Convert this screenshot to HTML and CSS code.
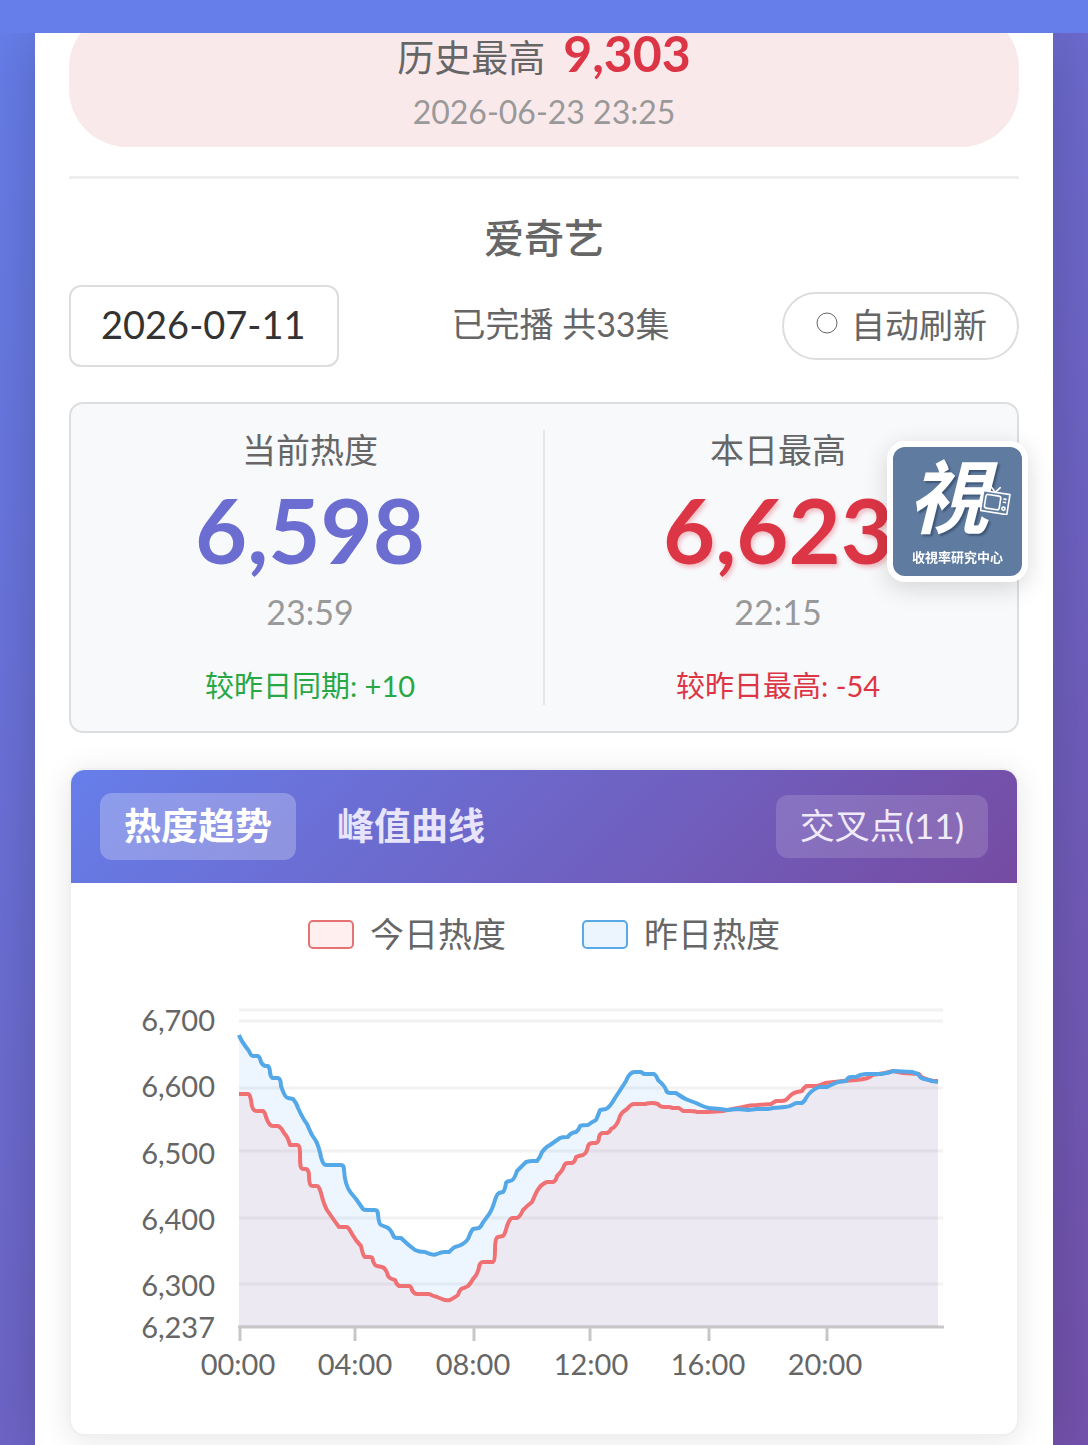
FILE: index.html
```html
<!DOCTYPE html>
<html lang="zh-CN">
<head>
    <meta charset="UTF-8">
    <meta name="viewport" content="width=device-width, initial-scale=1.0">
    <title>爱奇艺 热度趋势</title>
    <link rel="stylesheet" href="styles.css">
</head>
<body>
    <div class="top-bar"></div>

    <div class="page">
        <main class="container">
            <!-- 历史最高 -->
            <section class="record">
                <div class="record-main">
                    <span>历史最高</span>
                    <strong>9,303</strong>
                </div>
                <div class="record-time">2026-06-23 23:25</div>
            </section>

            <hr class="divider">

            <h2 class="platform">爱奇艺</h2>

            <div class="controls">
                <input type="text" class="date-input" value="2026-07-11" aria-label="日期">
                <span class="status">已完播 共33集</span>
                <button type="button" class="refresh-btn">
                    <svg class="refresh-icon" viewBox="0 0 22 22" aria-hidden="true">
                        <circle cx="11" cy="11" r="10" fill="none" stroke="#666" stroke-width="1"/>
                    </svg>
                    <span>自动刷新</span>
                </button>
            </div>

            <!-- 热度数据 -->
            <section class="stats">
                <div class="stat">
                    <div class="stat-label">当前热度</div>
                    <div class="stat-value current">6,598</div>
                    <div class="stat-time">23:59</div>
                    <div class="stat-diff up">较昨日同期: +10</div>
                </div>
                <div class="stat">
                    <div class="stat-label">本日最高</div>
                    <div class="stat-value highest">6,623</div>
                    <div class="stat-time">22:15</div>
                    <div class="stat-diff down">较昨日最高: -54</div>
                </div>
            </section>

            <!-- 趋势图 -->
            <section class="chart-card">
                <div class="chart-header">
                    <div class="tabs">
                        <button type="button" class="tab active">热度趋势</button>
                        <button type="button" class="tab">峰值曲线</button>
                    </div>
                    <button type="button" class="cross-btn">交叉点(11)</button>
                </div>

                <div class="legend">
                    <div class="legend-item"><span class="swatch today"></span>今日热度</div>
                    <div class="legend-item"><span class="swatch yesterday"></span>昨日热度</div>
                </div>

                <svg class="chart" viewBox="0 0 946 440" role="img" aria-label="热度趋势图">
                    <g class="grid">
                        <path d="M168 30H872M168 41H872M168 108H872M168 171H872M168 238H872M168 304H872"/>
                    </g>

                    <path class="area-yesterday" d="M168 55 172 63 178 71 181 76 188 76 191 85 198 86 200 98 208 98 211 108 216 118 222 119 229 132 236 144 241 155 246 163 250 177 254 185 272 185 274 200 279 213 285 219 293 230 306 230 308 244 315 247 320 251 323 257 330 258 336 263 344 270 354 272 362 275 372 272 378 272 384 267 391 264 397 259 401 249 408 248 416 237 421 227 426 214 432 212 435 202 442 201 447 191 455 182 467 181 471 172 479 165 489 158 497 157 501 153 506 151 510 145 517 144 525 140 529 130 537 128 544 118 550 108 555 101 559 93 563 92 570 92 573 94 585 95 588 102 594 107 597 113 605 113 614 119 625 123 638 128 649 129 656 130 667 129 677 130 697 129 719 126 725 123 732 123 739 113 748 108 756 107 767 102 775 101 777 97 785 97 792 94 814 93 822 91 841 92 848 94 851 99 858 100 861 101 867 102V346H168Z"/>
                    <path class="area-today" d="M168 114 178 114 181 124 184 131 193 132 196 140 201 146 208 146 216 157 220 165 227 166 229 180 231 189 237 190 239 205 247 206 252 218 256 230 262 239 268 247 277 248 284 260 290 266 293 276 300 277 304 285 311 287 316 292 318 298 324 300 327 305 339 306 344 313 358 314 366 317 374 320 379 320 387 315 391 308 397 306 402 299 407 293 410 282 423 282 425 257 432 256 436 246 440 238 447 238 452 230 461 222 466 211 475 202 483 202 486 196 491 190 495 183 502 183 505 177 513 174 518 164 526 163 529 154 537 153 544 146 549 136 556 129 563 124 574 124 581 123 587 124 592 127 609 128 612 131 624 131 637 132 652 131 672 127 686 125 701 124 706 121 714 120 721 113 731 111 734 107 746 106 754 103 772 101 794 99 801 95 814 93 822 91 832 94 848 94 851 99 858 100 861 101 867 102V346H168Z"/>

                    <path class="line-today" d="M168 114H177Q179 114 180 120 181 131 185 131H192Q194 132 195 137 198 146 202 146H207Q210 147 213 153 217 157 219 165H226Q229 165 229 172C229 184 229 189 232 189H235Q238 190 238 196 238 206 241 206H246Q248 206 250 213 253 225 256 230 262 239 268 247H276Q278 248 281 254 285 261 290 266 292 276 294 277H299Q302 277 302 281 304 286 306 286L311 287Q315 288 317 296 319 299 324 300 325 304 328 306H338Q340 306 341 310 343 314 346 314H358Q362 316 366 317L371 319Q375 321 379 320 383 318 387 315 389 308 393 308L397 306Q400 303 402 299 407 294 408 287 409 282 412 282H422Q424 281 424 270 424 257 427 257L432 256Q434 254 436 246 439 238 441 238H446Q449 237 452 230 457 225 461 222 464 215 466 211 470 204 476 202H482Q485 201 486 196 492 190 493 186 494 183 497 183H501Q504 182 505 177 507 176 512 175 516 173 517 166 518 163 522 163H525Q528 162 528 157 529 153 532 153H536Q539 152 540 149 546 147 549 136 551 132 556 129 560 124 563 124H574Q581 122 587 124 589 127 593 127H598L602 128H608L612 131H618Q624 131 626 132H637L652 131Q666 128 672 127 679 125 686 125L700 124 705 121H710Q715 121 717 118 721 113 726 112L731 111Q733 107 736 106H746L754 103 772 101 785 100Q799 99 801 95L814 93 822 91 832 93 848 94Q851 98 853 98L858 100 862 101H867"/>
                    <path class="line-yesterday" d="M168 55Q170 61 178 71 180 76 182 76H187Q189 77 190 82 192 86 195 86H197Q199 88 199 93 200 98 202 98H207Q210 99 210 106 214 118 217 118L222 119Q225 122 227 128 232 139 236 144 238 149 241 155L245 161Q248 167 250 177 252 185 255 185H270Q273 185 273 190 274 206 280 213L285 219 292 229Q293 230 296 230H304Q307 230 307 235 308 245 310 245L315 247Q319 248 322 255 323 258 326 258L330 258Q336 264 344 270 348 272 354 272 362 276 366 274 371 272 373 272H378Q382 268 384 267 393 265 397 259 400 251 402 249L408 248 410 246Q412 242 416 237 421 231 424 220 426 214 428 213L432 212Q434 210 435 203 436 201 439 201 443 201 446 191 450 187 455 182 459 181 461 181H466Q469 178 471 172 476 166 479 165L489 158Q491 157 497 157 499 153 505 152 508 150 509 146 511 145 517 145 521 142 525 140 528 133 529 130L535 129Q539 127 544 118 550 109 555 101 558 93 563 92H570L573 94H583Q585 95 587 100 594 106 595 110 596 113 599 113L605 113Q612 118 617 120L625 123Q633 127 638 128L649 129 656 130 667 129 677 130 686 129H697L702 128Q717 127 719 126L725 123H731Q734 121 735 118 740 110 748 107H756L760 105 767 102 775 101Q777 97 780 97H785L789 95 795 94H810Q818 93 822 91L841 92 847 94Q850 99 853 99L858 100 861 101 867 102"/>

                    <path class="axis" d="M167 347H873M169 347V361M284 347V361M403 347V361M519 347V361M638 347V361M756 347V361"/>

                    <g class="labels-y">
                        <text x="144" y="51">6,700</text>
                        <text x="144" y="117">6,600</text>
                        <text x="144" y="184">6,500</text>
                        <text x="144" y="250">6,400</text>
                        <text x="144" y="316">6,300</text>
                        <text x="144" y="358">6,237</text>
                    </g>
                    <g class="labels-x">
                        <text x="167" y="395">00:00</text>
                        <text x="284" y="395">04:00</text>
                        <text x="402" y="395">08:00</text>
                        <text x="520" y="395">12:00</text>
                        <text x="637" y="395">16:00</text>
                        <text x="754" y="395">20:00</text>
                    </g>
                </svg>
            </section>
        </main>
    </div>

    <!-- 悬浮标志 -->
    <a href="#" class="float-logo" aria-label="收視率研究中心">
        <span class="logo-char">視</span>
        <svg class="logo-tv" viewBox="0 0 30 28" aria-hidden="true">
            <g fill="none" stroke="#fff" stroke-width="1.5" stroke-linejoin="round" stroke-linecap="round" transform="rotate(9 15 15)">
                <rect x="2" y="7" width="25" height="19" fill="#5f7b9f"/>
                <rect x="5" y="10" width="14" height="13" rx="2"/>
                <path d="M8 2 13 7 17 2"/>
                <path d="M22 12H24M22 15H24"/>
                <circle cx="23" cy="21" r="1.5"/>
            </g>
        </svg>
        <span class="logo-name">收視率研究中心</span>
    </a>
</body>
</html>
```
FILE: styles.css
```css
* {
    box-sizing: border-box;
}

body {
    margin: 0;
    font-family: Lato, "Noto Sans CJK SC", sans-serif;
    color: #666;
    background: #667eea;
}

button, input {
    font-family: inherit;
}

.top-bar {
    position: sticky;
    top: 0;
    z-index: 1;
    height: 33px;
    background: #667eea;
}

.page {
    display: flow-root;
    padding: 0 35px;
    background: linear-gradient(135deg, #667eea 0%, #764ba2 115%);
}

.container {
    display: flow-root;
    padding: 0 34px 11px;
    background: #fff;
    box-shadow: 0 0 58px rgba(0, 0, 0, 0.2);
}

/* 历史最高 */
.record {
    margin-top: -23px;
    padding: 13px 20px 15px;
    border-radius: 58px;
    background: #fae9eb;
    text-align: center;
}

.record-main {
    display: flex;
    justify-content: center;
    align-items: baseline;
    gap: 18px;
    line-height: 60px;
    font-size: 37px;
}

.record-main strong {
    font-size: 50px;
    color: #dc3545;
}

.record-time {
    margin-top: 4px;
    font-size: 32px;
    line-height: 40px;
    color: #999;
}

.divider {
    height: 3px;
    margin: 29px 0;
    border: none;
    background: #eee;
}

.platform {
    margin: 0 0 17px;
    font-size: 40px;
    font-weight: 500;
    line-height: 60px;
    text-align: center;
}

/* 日期和刷新 */
.controls {
    display: flex;
    justify-content: space-between;
    align-items: center;
}

.date-input {
    width: 270px;
    height: 82px;
    padding: 0 30px 4px;
    border: 2px solid #ddd;
    border-radius: 12px;
    background: #fff;
    font-size: 38px;
    color: #333;
}

.status {
    padding-bottom: 4px;
    font-size: 34px;
    line-height: 40px;
}

.refresh-btn {
    display: flex;
    align-items: center;
    gap: 13px;
    height: 68px;
    padding: 0 30px 6px 32px;
    border: 2px solid #ddd;
    border-radius: 34px;
    background: #fff;
    font-size: 34px;
    color: #666;
    cursor: pointer;
}

.refresh-icon {
    width: 22px;
    height: 22px;
}

/* 热度数据 */
.stats {
    display: flex;
    margin-top: 35px;
    padding: 26px 6px;
    border: 2px solid #dcdee0;
    border-radius: 14px;
    background: #f8f9fb;
}

.stat {
    flex: 1;
    text-align: center;
}

.stat + .stat {
    border-left: 2px solid #e5e7ea;
}

.stat-label {
    font-size: 34px;
    line-height: 40px;
}

.stat-value {
    margin: 9px 0 13px;
    font-size: 90px;
    font-weight: 700;
    line-height: 100px;
}

.current {
    color: #6b6dd0;
}

.highest {
    color: #dc3545;
    text-shadow: 2px 3px 4px rgba(220, 53, 69, 0.3);
}

.stat-time {
    font-size: 34px;
    line-height: 40px;
    color: #999;
}

.stat-diff {
    margin-top: 35px;
    font-size: 29px;
    line-height: 38px;
}

.up {
    color: #28a745;
}

.down {
    color: #dc3545;
}

/* 趋势图 */
.chart-card {
    margin-top: 35px;
    padding-bottom: 14px;
    border: 2px solid #f0f0f0;
    border-radius: 16px;
    background: #fff;
    box-shadow: 0 4px 30px rgba(0, 0, 0, 0.1);
    overflow: hidden;
}

.chart-header {
    display: flex;
    justify-content: space-between;
    align-items: center;
    height: 113px;
    padding: 0 29px;
    background: linear-gradient(135deg, #667eea 0%, #764ba2 100%);
}

.tabs {
    display: flex;
    gap: 17px;
}

.tab {
    height: 67px;
    padding: 0 24px 6px;
    border: none;
    border-radius: 12px;
    background: none;
    font-size: 37px;
    font-weight: 700;
    color: #e8e4fb;
    cursor: pointer;
}

.tab.active {
    background: rgba(255, 255, 255, 0.25);
    color: #fff;
}

.cross-btn {
    height: 63px;
    padding: 0 24px 6px;
    border: none;
    border-radius: 12px;
    background: rgba(255, 255, 255, 0.15);
    font-size: 35px;
    color: #f0eafa;
    cursor: pointer;
}

.legend {
    display: flex;
    justify-content: center;
    gap: 76px;
    padding: 31px 0 26px;
    font-size: 34px;
    line-height: 40px;
}

.legend-item {
    display: flex;
    align-items: center;
    gap: 16px;
}

.swatch {
    width: 46px;
    height: 29px;
    border: 2px solid;
    border-radius: 5px;
}

.swatch.today {
    border-color: #e57373;
    background: #ffefee;
}

.swatch.yesterday {
    border-color: #5aa9e6;
    background: #ecf5fe;
}

.chart {
    display: block;
    width: 100%;
    font-size: 29px;
}

.grid path {
    stroke: #f2f2f2;
    stroke-width: 3;
}

.area-yesterday {
    fill: rgba(78, 166, 245, 0.1);
}

.area-today {
    fill: rgba(245, 107, 125, 0.09);
}

.line-today,
.line-yesterday {
    fill: none;
    stroke-width: 4;
    stroke-linejoin: round;
}

.line-today {
    stroke: #f07174;
}

.line-yesterday {
    stroke: #55a8e8;
}

.axis {
    stroke: rgba(0, 0, 0, 0.22);
    stroke-width: 3;
}

.labels-y text {
    text-anchor: end;
    fill: #666;
}

.labels-x text {
    text-anchor: middle;
    fill: #666;
}

/* 悬浮标志 */
.float-logo {
    position: fixed;
    top: 441px;
    right: 60px;
    width: 141px;
    height: 141px;
    border: 6px solid #fff;
    border-radius: 18px;
    background: #5f7b9f;
    box-shadow: 0 6px 24px rgba(0, 0, 0, 0.15);
    color: #fff;
    text-align: center;
    text-decoration: none;
}

.logo-char {
    display: block;
    height: 98px;
    padding-right: 18px;
    font-size: 80px;
    font-weight: 700;
    font-style: italic;
    line-height: 98px;
    text-shadow: 2px 2px 2px rgba(30, 50, 80, 0.5);
}

.logo-tv {
    position: absolute;
    top: 38px;
    right: 10px;
    width: 32px;
    height: 30px;
}

.logo-name {
    display: block;
    font-size: 13px;
    font-weight: 700;
    line-height: 24px;
}
```
